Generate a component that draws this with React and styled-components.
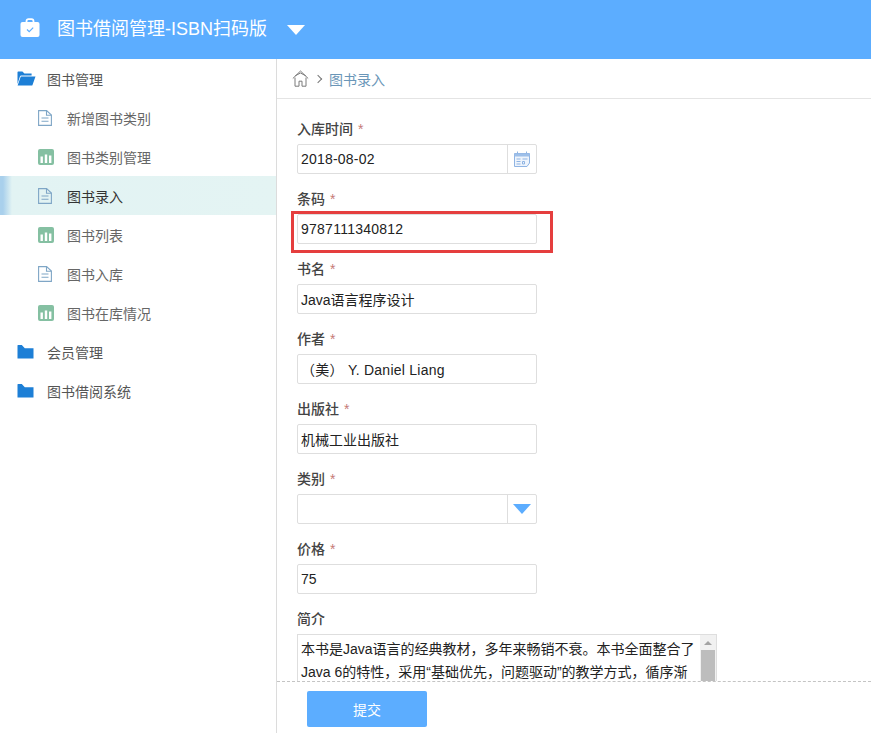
import React from 'react'
import styled, { createGlobalStyle } from 'styled-components'

const GlobalStyle = createGlobalStyle`
  html, body {
    margin: 0;
    padding: 0;
    height: 100%;
    overflow: hidden;
    background: #fff;
    font-family: "Liberation Sans", "Noto Sans CJK SC", sans-serif;
  }
`

const BagIcon = () => (
  <svg width="20" height="20" viewBox="0 0 20 20">
    <path d="M6.500 4.500V3.200C6.500 2 7.300 1.200 8.500 1.200h3c1.200 0 2 .8 2 2v1.300" fill="none" stroke="#fff" strokeWidth="1.800" />
    <rect x="0.500" y="4" width="19" height="15" rx="2" fill="#fff" />
    <path d="M7 11.500l2.200 2.200 4-4" fill="none" stroke="#5cadff" strokeWidth="1.200" />
  </svg>
)

const FolderOpenIcon = () => (
  <svg width="19" height="15" viewBox="0 0 19 15">
    <path d="M0.500 13V1.200C0.500 .7 .8 .4 1.200 .4h4.200l2 2h7.200v2H4.200C3.600 4.400 3.200 4.700 3 5.200z" fill="#1d7fd6" />
    <path d="M3.800 5.400h14.700l-3 8.600c-.1.4-.4.6-.8.6H.6z" fill="#1d7fd6" />
  </svg>
)

const FolderIcon = () => (
  <svg width="17" height="14" viewBox="0 0 17 14">
    <path d="M.5 13.600V.6C.5.3.7 0 1 0h3.800l3 3.200h8.700v10.400z" fill="#1d7fd6" />
  </svg>
)

const DocIcon = () => (
  <svg width="14" height="16" viewBox="0 0 14 16">
    <path d="M.6.6h8l4.800 4.500v10.300H.6z" fill="none" stroke="#7fa6c6" strokeWidth="1.100" />
    <path d="M8.500.7v4.500h4.800" fill="none" stroke="#7fa6c6" strokeWidth="1.100" />
    <path d="M3.500 8h7M3.500 11.300h7" stroke="#7fa6c6" strokeWidth="1.100" />
  </svg>
)

const ChartIcon = () => (
  <svg width="16" height="16" viewBox="0 0 16 16">
    <rect width="16" height="16" rx="2" fill="#85c0a2" />
    <path d="M2.500 7.500h2.400v6.500H2.500zM6.800 5.500h2.400V14H6.800zM11 6.500h2.400V14H11z" fill="#fff" />
  </svg>
)

const HomeIcon = () => (
  <svg width="17" height="17" viewBox="0 0 17 17">
    <path d="M.8 8.500L8.500 1l7.700 7.500M3 7.600v8.600h4v-5h3v5h4V7.600M3.200 5.800L8.500 3l5.300 2.800" fill="none" stroke="#7a7a7a" strokeWidth="1" />
  </svg>
)

const CalendarIcon = () => (
  <svg width="16" height="16" viewBox="0 0 16 16">
    <path d="M.5 2.500h15v9.500l-2.500 3.500H.5z" fill="#eef4fc" stroke="#8fb4e3" strokeWidth="1" />
    <path d="M.5 2.500h15v3H.5z" fill="#9dbfe9" />
    <path d="M3.500 .5v2M12.500 .5v2M2.500 8h4M2.500 10.500h4M2.500 13h4M8.500 8h5M8.500 10.500h2v2.500h-2z" fill="none" stroke="#8fb4e3" strokeWidth="1" />
  </svg>
)

const Page = styled.div`
  width: 871px;
  height: 733px;
  display: flex;
  flex-direction: column;
  overflow: hidden;
`
const Header = styled.header`
  height: 59px;
  flex: none;
  background: #5cadff;
  display: flex;
  align-items: center;
  padding-left: 20px;
  color: #fff;
`
const Logo = styled.span`
  display: flex;
  margin-top: -4px;
`
const Title = styled.h1`
  margin: 0 20px 0 17px;
  font-size: 18px;
  font-weight: 400;
  line-height: 59px;
  white-space: nowrap;
`
const Caret = styled.span`
  width: 0;
  height: 0;
  border-left: 9px solid transparent;
  border-right: 9px solid transparent;
  border-top: 10px solid ${p => p.$color || '#fff'};
`
const Body = styled.div`
  flex: 1;
  min-height: 0;
  display: flex;
`
const Sidebar = styled.nav`
  width: 276px;
  flex: none;
  border-right: 1px solid #dcdcdc;
`
const Group = styled.div`
  height: 39px;
  display: flex;
  align-items: center;
  padding-left: 17px;
  font-size: 14px;
  color: #555;
`
const GroupIcon = styled.span`
  width: 30px;
  display: flex;
  align-items: center;
`
const Item = styled.div`
  height: 39px;
  display: flex;
  align-items: center;
  padding-left: 38px;
  font-size: 14px;
  color: ${p => (p.$active ? '#333' : '#666')};
  background: ${p => (p.$active
    ? 'linear-gradient(90deg, #a9d0ec 0, #a9d0ec 3px, #e2f3f3 12px, #e4f4f3 100%)'
    : 'transparent')};
`
const ItemIcon = styled.span`
  width: 29px;
  display: flex;
  align-items: center;
`
const Main = styled.main`
  flex: 1;
  min-width: 0;
  display: flex;
  flex-direction: column;
`
const Crumbs = styled.div`
  height: 40px;
  flex: none;
  box-sizing: border-box;
  border-bottom: 1px solid #e4e4e4;
  display: flex;
  align-items: center;
  padding-left: 15px;
  font-size: 14px;
  color: #6a96b8;
`
const CrumbSep = styled.span`
  width: 5px;
  height: 5px;
  margin: 0 8px 0 6px;
  border-top: 1px solid #777;
  border-right: 1px solid #777;
  transform: rotate(45deg);
`
const Form = styled.form`
  flex: 1;
  min-height: 0;
  overflow: hidden;
  padding: 21px 0 0 20px;
`
const Field = styled.div`
  position: relative;
  height: 70px;
`
const Label = styled.label`
  display: block;
  height: 24px;
  line-height: 19px;
  font-size: 14px;
  font-weight: 500;
  color: #444;
`
const Star = styled.span`
  margin-left: 5px;
  color: #c57a76;
  font-weight: 400;
`
const InputBox = styled.div`
  width: 240px;
  height: 30px;
  box-sizing: border-box;
  border: 1px solid #dedede;
  border-radius: 2px;
  display: flex;
  background: #fff;
`
const Input = styled.input`
  flex: 1;
  min-width: 0;
  border: 0;
  outline: 0;
  padding: 0 3px;
  background: transparent;
  font: 14px "Liberation Sans", "Noto Sans CJK SC", sans-serif;
  letter-spacing: ${p => p.$spacing || 0}px;
  color: #222;
`
const Addon = styled.span`
  width: 29px;
  flex: none;
  box-sizing: border-box;
  border-left: 1px solid #dedede;
  display: flex;
  align-items: center;
  justify-content: center;
`
const Highlight = styled.div`
  position: absolute;
  left: -6px;
  top: 21px;
  width: 262px;
  height: 42px;
  box-sizing: border-box;
  border: 3px solid #e53e3e;
  pointer-events: none;
`
const TextArea = styled.div`
  width: 420px;
  height: 90px;
  box-sizing: border-box;
  border: 1px solid #dedede;
  display: flex;
`
const AreaText = styled.div`
  flex: 1;
  padding: 3px 3px;
  font-size: 14px;
  line-height: 23px;
  color: #222;
  white-space: nowrap;
  overflow: hidden;
`
const ScrollTrack = styled.div`
  width: 16px;
  flex: none;
  background: #f1f1f1;
  display: flex;
  flex-direction: column;
  align-items: center;
`
const ScrollArrow = styled.span`
  margin: 6px 0 5px;
  width: 0;
  height: 0;
  border-left: 4px solid transparent;
  border-right: 4px solid transparent;
  border-bottom: 4px solid #a3a3a3;
`
const ScrollThumb = styled.span`
  width: 14px;
  height: 50px;
  background: #bdbdbd;
`
const Footer = styled.div`
  height: 52px;
  flex: none;
  box-sizing: border-box;
  border-top: 1px dashed #c4c4c4;
  padding: 9px 0 0 30px;
`
const Submit = styled.button`
  width: 120px;
  height: 36px;
  border: 0;
  border-radius: 2px;
  background: #5cadff;
  color: #fff;
  font: 14px "Liberation Sans", "Noto Sans CJK SC", sans-serif;
`

const fields = [
  { label: '条码', value: '9787111340812', marked: true, spacing: 0.25 },
  { label: '书名', value: 'Java语言程序设计' },
  { label: '作者', value: '（美） Y. Daniel Liang', spacing: 0.25 },
  { label: '出版社', value: '机械工业出版社' },
]

const menu = [
  { label: '新增图书类别', icon: <DocIcon /> },
  { label: '图书类别管理', icon: <ChartIcon /> },
  { label: '图书录入', icon: <DocIcon />, active: true },
  { label: '图书列表', icon: <ChartIcon /> },
  { label: '图书入库', icon: <DocIcon /> },
  { label: '图书在库情况', icon: <ChartIcon /> },
]

const App = () => {
  return (
    <Page>
      <GlobalStyle />
      <Header>
        <Logo><BagIcon /></Logo>
        <Title>图书借阅管理-ISBN扫码版</Title>
        <Caret />
      </Header>
      <Body>
        <Sidebar>
          <Group>
            <GroupIcon><FolderOpenIcon /></GroupIcon>
            图书管理
          </Group>
          {menu.map(item => (
            <Item key={item.label} $active={item.active}>
              <ItemIcon>{item.icon}</ItemIcon>
              {item.label}
            </Item>
          ))}
          <Group>
            <GroupIcon><FolderIcon /></GroupIcon>
            会员管理
          </Group>
          <Group>
            <GroupIcon><FolderIcon /></GroupIcon>
            图书借阅系统
          </Group>
        </Sidebar>
        <Main>
          <Crumbs>
            <HomeIcon />
            <CrumbSep />
            图书录入
          </Crumbs>
          <Form>
            <Field>
              <Label>入库时间<Star>*</Star></Label>
              <InputBox>
                <Input readOnly value="2018-08-02" $spacing={0.2} />
                <Addon><CalendarIcon /></Addon>
              </InputBox>
            </Field>
            {fields.map(f => (
              <Field key={f.label}>
                <Label>{f.label}<Star>*</Star></Label>
                <InputBox>
                  <Input readOnly value={f.value} $spacing={f.spacing} />
                </InputBox>
                {f.marked && <Highlight />}
              </Field>
            ))}
            <Field>
              <Label>类别<Star>*</Star></Label>
              <InputBox>
                <Input readOnly value="" />
                <Addon><Caret $color="#5cadff" /></Addon>
              </InputBox>
            </Field>
            <Field>
              <Label>价格<Star>*</Star></Label>
              <InputBox>
                <Input readOnly value="75" />
              </InputBox>
            </Field>
            <Field>
              <Label>简介</Label>
              <TextArea>
                <AreaText>
                  本书是Java语言的经典教材，多年来畅销不衰。本书全面整合了<br />
                  Java 6的特性，采用“基础优先，问题驱动”的教学方式，循序渐
                </AreaText>
                <ScrollTrack>
                  <ScrollArrow />
                  <ScrollThumb />
                </ScrollTrack>
              </TextArea>
            </Field>
          </Form>
          <Footer>
            <Submit type="button">提交</Submit>
          </Footer>
        </Main>
      </Body>
    </Page>
  )
}

export default App
